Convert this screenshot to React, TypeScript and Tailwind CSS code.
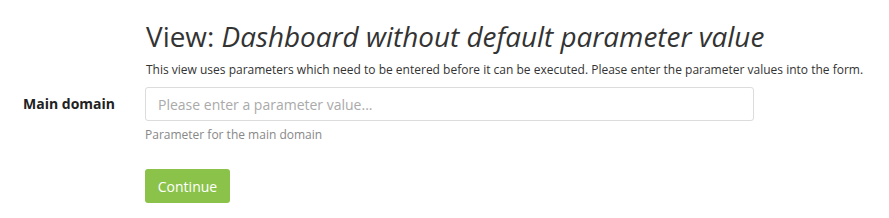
export default function App() {
  return (
    <div className="w-[889px] h-[218px] bg-white text-[#333] font-['Open_Sans',sans-serif]">
      <div className="flex flex-col pl-[146px] pt-[16px]">
        <h1 className="text-[27.9px] leading-[40px] font-normal">
          View: <em className="italic">Dashboard without default parameter value</em>
        </h1>
        <p className="mt-[5px] text-[12px] leading-[17px]">
          This view uses parameters which need to be entered before it can be executed. Please enter the parameter values into the form.
        </p>
      </div>
      <form className="mt-[9px] flex flex-col">
        <div className="flex items-start">
          <label className="w-[145px] pl-[23px] pt-[7px] text-[14px] leading-[20px] font-bold text-[#222]">
            Main domain
          </label>
          <div className="flex flex-col">
            <input
              type="text"
              placeholder="Please enter a parameter value..."
              className="w-[609px] h-[34px] rounded-[3px] border border-[#dcdcdc] px-[12px] text-[14px] placeholder:text-[#aaa] outline-none"
            />
            <span className="mt-[5px] text-[12px] leading-[17px] text-[#888]">Parameter for the main domain</span>
          </div>
        </div>
        <div className="pl-[145px] mt-[26px]">
          <button
            type="button"
            className="h-[34px] w-[85px] rounded-[3px] bg-[#8bc34a] text-white text-[14px]"
          >
            Continue
          </button>
        </div>
      </form>
    </div>
  )
}
